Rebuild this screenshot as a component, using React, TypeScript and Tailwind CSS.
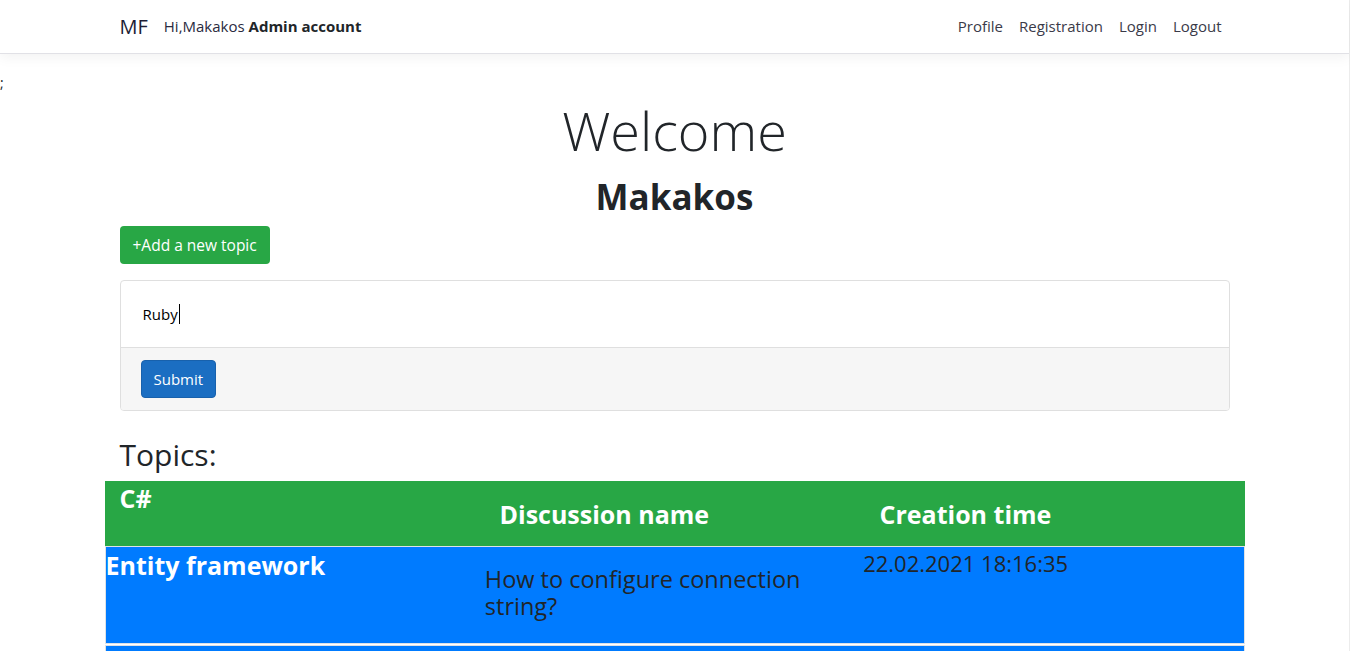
export default function App() {
  const font = { fontFamily: '"Open Sans", "Noto Sans", sans-serif' };
  return (
    <div className="min-h-screen w-full bg-white text-[#212529] border-r border-[#ececec]" style={font}>
      <nav className="h-[54px] border-b border-[#e1e1e6] shadow-[0_4px_12px_rgba(0,0,0,0.05)] bg-white">
        <div className="w-[1110px] mx-auto h-full flex items-center">
          <span className="text-[20px] text-[#1d1d35] mr-[16px]">MF</span>
          <span className="text-[15px] text-[#2a2a40]">
            Hi,Makakos <b className="text-[#212529]">Admin account</b>
          </span>
          <div className="ml-auto flex gap-[16px] text-[15px] text-[#3a3a48] mr-[8px]">
            <a>Profile</a>
            <a>Registration</a>
            <a>Login</a>
            <a>Logout</a>
          </div>
        </div>
      </nav>

      <div className="h-[40px] pt-[22px] text-[14px] leading-none">;</div>

      <main className="w-[1110px] mx-auto">
        <h1 className="text-center text-[54px] font-light leading-[1.1] mt-[7px]">Welcome</h1>
        <h2 className="text-center text-[35px] font-bold leading-[1.2] mt-[16px]">Makakos</h2>

        <button className="mt-[8px] h-[38px] px-[13px] rounded-[4px] bg-[#28a745] text-white text-[15.5px]">
          +Add a new topic
        </button>

        <div className="mt-[16px] border border-[#dfdfdf] rounded-[4px] overflow-hidden">
          <div className="h-[66px] flex items-center px-[22px] text-[15px] text-black">
            Ruby<span className="inline-block w-px h-[20px] bg-black ml-px" />
          </div>
          <div className="h-[63px] bg-[#f6f6f6] border-t border-[#dfdfdf] flex items-center px-[20px]">
            <button className="h-[38px] px-[12px] rounded-[4px] bg-[#1b6ec2] border border-[#1861ac] text-white text-[15px]">
              Submit
            </button>
          </div>
        </div>

        <h3 className="mt-[26px] text-[30px] font-medium leading-[1.2]">Topics:</h3>
      </main>

      <section className="w-[1140px] mx-auto mt-[8px]">
        <div className="h-[65px] bg-[#28a745] text-white font-bold text-[25px] grid grid-cols-3">
          <div className="px-[15px] leading-[1.2] pt-[2px]">C#</div>
          <div className="px-[15px] pt-[18px] leading-[1.2]">Discussion name</div>
          <div className="px-[15px] pt-[18px] leading-[1.2]">Creation time</div>
        </div>
        <div className="border border-[#dee2e6] bg-[#007bff] h-[98px] grid grid-cols-3">
          <div className="text-white font-bold text-[25px] leading-[1.2] pt-[3px]">Entity framework</div>
          <div className="text-[#212529] text-[23.5px] leading-[27px] pt-[19px]">
            How to configure connection string?
          </div>
          <div className="text-[#212529] text-[22px] leading-[1.2] pt-[3px] -ml-px">22.02.2021 18:16:35</div>
        </div>
        <div className="mt-px border border-[#dee2e6] bg-[#007bff] h-[20px]" />
      </section>
    </div>
  );
}
